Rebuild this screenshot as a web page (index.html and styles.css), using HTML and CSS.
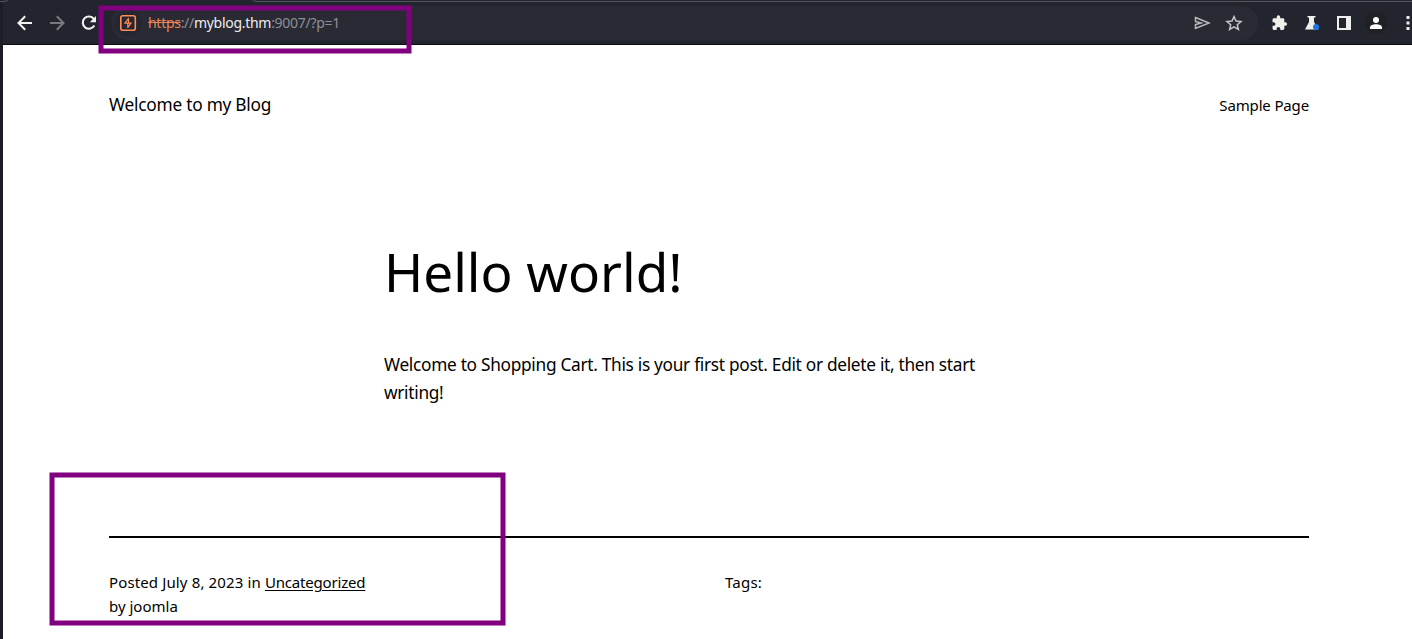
FILE: index.html
```html
<!DOCTYPE html>
<html lang="en">
<head>
<meta charset="utf-8">
<title>Hello world!</title>
<link rel="stylesheet" href="styles.css">
</head>
<body>
<div class="window">
  <header class="toolbar">
    <svg class="tab-edge" width="1412" height="5" viewBox="0 0 1412 5"><path d="M0 1.5H3Q7 1.5 8 0M253 0Q254 1.5 257 1.5H1412" fill="none" stroke="#55565d"/></svg>
    <nav class="nav-buttons">
      <svg width="24" height="24" viewBox="0 0 24 24"><path d="M19 12H6M12.200 5.200L5.500 12l6.700 6.800" fill="none" stroke="#f1f1ee" stroke-width="2"/></svg>
      <svg width="24" height="24" viewBox="0 0 24 24"><path d="M5 12h13M11.800 5.200L18.500 12l-6.700 6.800" fill="none" stroke="#797a7d" stroke-width="2"/></svg>
      <svg width="24" height="24" viewBox="0 0 24 24"><path d="M16.800 8A6.100 6.100 0 1 0 17.300 14.500" fill="none" stroke="#f1f1ee" stroke-width="2.100"/><path d="M19 5v6.200H12.800z" fill="#f1f1ee"/></svg>
    </nav>
    <div class="address">
      <span class="site-icon"><svg width="18" height="18" viewBox="0 0 18 18"><rect x="1.800" y="1.800" width="14.500" height="14.500" rx="2" fill="none" stroke="#ff8b59" stroke-width="1.600"/><path d="M9.700 4.200L6 9.200H12L8.600 13.800M9.500 4.200V9M8.800 9v5" fill="none" stroke="#ff8b59" stroke-width="1.200"/></svg></span>
      <span class="url"><span class="scheme">https</span>://<span class="host">myblog.thm</span>:9007/?p=1</span>
      <span class="address-actions">
        <svg width="20" height="20" viewBox="0 0 20 20"><path d="M3.500 4.500L17 10 3.500 15.500V11.500L9 10 3.500 8.500z" fill="none" stroke="#b9babc" stroke-width="1.500"/></svg>
        <svg width="20" height="20" viewBox="0 0 20 20"><path d="M10 3.500l2 4.500 5 .5-3.700 3.200 1.100 4.800L10 13.900l-4.400 2.600 1.100-4.800L3 8.500 8 8z" fill="none" stroke="#c5c6c7" stroke-width="1.500"/></svg>
      </span>
    </div>
    <div class="extensions">
      <svg width="20" height="20" viewBox="0 0 24 24"><path d="M20.500 11H19V7a2 2 0 0 0-2-2h-4V3.500a2.500 2.500 0 0 0-5 0V5H4a2 2 0 0 0-2 2v3.800h1.500a2.700 2.700 0 0 1 0 5.400H2V20a2 2 0 0 0 2 2h3.800v-1.500a2.700 2.700 0 0 1 5.400 0V22H17a2 2 0 0 0 2-2v-4h1.500a2.500 2.500 0 0 0 0-5z" fill="#efefec" transform="translate(1.400 2) scale(.83)"/></svg>
      <svg width="20" height="20" viewBox="0 0 20 20"><path d="M5.500 3h8v1.500H12V9l4.500 7.500H3L7 9V4.500H5.500z" fill="#efefec"/><circle cx="14" cy="14" r="3" fill="#1a73e8"/></svg>
      <svg width="20" height="20" viewBox="0 0 20 20"><path d="M3 3h14v14H3zM5 5v10h7V5z" fill="#efefec" fill-rule="evenodd"/></svg>
      <svg class="profile" width="22" height="22" viewBox="0 0 22 22"><circle cx="11" cy="11" r="11" fill="#202124"/><circle cx="11" cy="8" r="3" fill="#fff"/><path d="M5 17v-1.500C5 13 8 12.200 11 12.200s6 .8 6 3.300V17z" fill="#fff"/></svg>
      <svg class="more" width="4" height="20" viewBox="0 0 4 20"><path d="M.5 3h3v3h-3zM.5 8.500h3v3h-3zM.5 14h3v3h-3z" fill="#efefec"/></svg>
    </div>
  </header>
  <main class="page">
    <div class="site-header">
      <span class="site-title">Welcome to my Blog</span>
      <span class="menu-link">Sample Page</span>
    </div>
    <article class="post">
      <h1 class="title">Hello world!</h1>
      <p class="content">Welcome to Shopping Cart. This is your first post. Edit or delete it, then start<br>writing!</p>
    </article>
    <footer class="meta">
      <div><span class="posted">Posted July 8, 2023 in </span><a class="category">Uncategorized</a><br>by joomla</div>
      <div class="tags">Tags:</div>
    </footer>
  </main>
</div>
<svg class="marks" width="1412" height="639" viewBox="0 0 1412 639">
  <rect x="101" y="8" width="308" height="43"/>
  <rect x="52" y="475" width="451" height="148"/>
</svg>
</body>
</html>
```
FILE: styles.css
```css
* { box-sizing: border-box; }
body { margin: 0; background: #fff; color: #000; font-family: "Noto Sans", sans-serif; overflow: hidden; }
.window { height: 639px; border-left: 3px solid #1c1d26; }
.toolbar { height: 45px; background: #23252e; border-bottom: 1px solid #0b0b0e; display: flex; align-items: center; padding: 1px 0 0 10px; }
.tab-edge { position: absolute; left: 0; top: 0; }
.nav-buttons { display: flex; gap: 8px; width: 98px; flex: none; }
.nav-buttons svg { flex: none; }
.address { width: 1147px; height: 34px; flex: none; border-radius: 17px; background: #292a34; display: flex; align-items: center; padding-left: 4px; }
.site-icon { width: 26px; height: 26px; border-radius: 13px; background: #25262f; display: flex; align-items: center; justify-content: center; }
.url { margin-left: 7px; font-size: 14px; line-height: 20px; letter-spacing: -0.29px; color: #8e8f94; white-space: nowrap; }
.scheme { color: #e8835a; text-decoration: line-through; }
.host { color: #eeeeec; }
.address-actions { display: flex; gap: 12px; margin-left: auto; padding-right: 14px; }
.extensions { display: flex; align-items: center; gap: 12px; margin-left: 12px; }
.extensions svg { flex: none; }
.profile { margin: 0 -1px; }
.more { margin-left: 8px; }
.page { height: 594px; padding: 46px 103px 0 106px; }
.site-header { display: flex; justify-content: space-between; align-items: center; height: 28px; }
.site-title { font-size: 17.3px; line-height: 28px; letter-spacing: -0.24px; }
.menu-link { font-size: 15px; line-height: 28px; letter-spacing: -0.15px; }
.post { padding: 118px 0 0 275px; }
.title { margin: 0; font-size: 53px; font-weight: 400; line-height: 70px; }
.content { margin: 44px 0 0; font-size: 17.3px; line-height: 28px; letter-spacing: -0.3px; white-space: nowrap; }
.meta { margin-top: 129px; border-top: 2px solid #000; padding-top: 32px; display: grid; grid-template-columns: 616px 1fr; font-size: 15px; line-height: 24px; }
.posted { letter-spacing: 0.13px; }
.category { letter-spacing: -0.18px; text-decoration: underline; text-underline-offset: 2px; }
.tags { letter-spacing: 0.2px; }
.marks { position: absolute; left: 0; top: 0; fill: none; stroke: #800080; stroke-width: 5; }
```
